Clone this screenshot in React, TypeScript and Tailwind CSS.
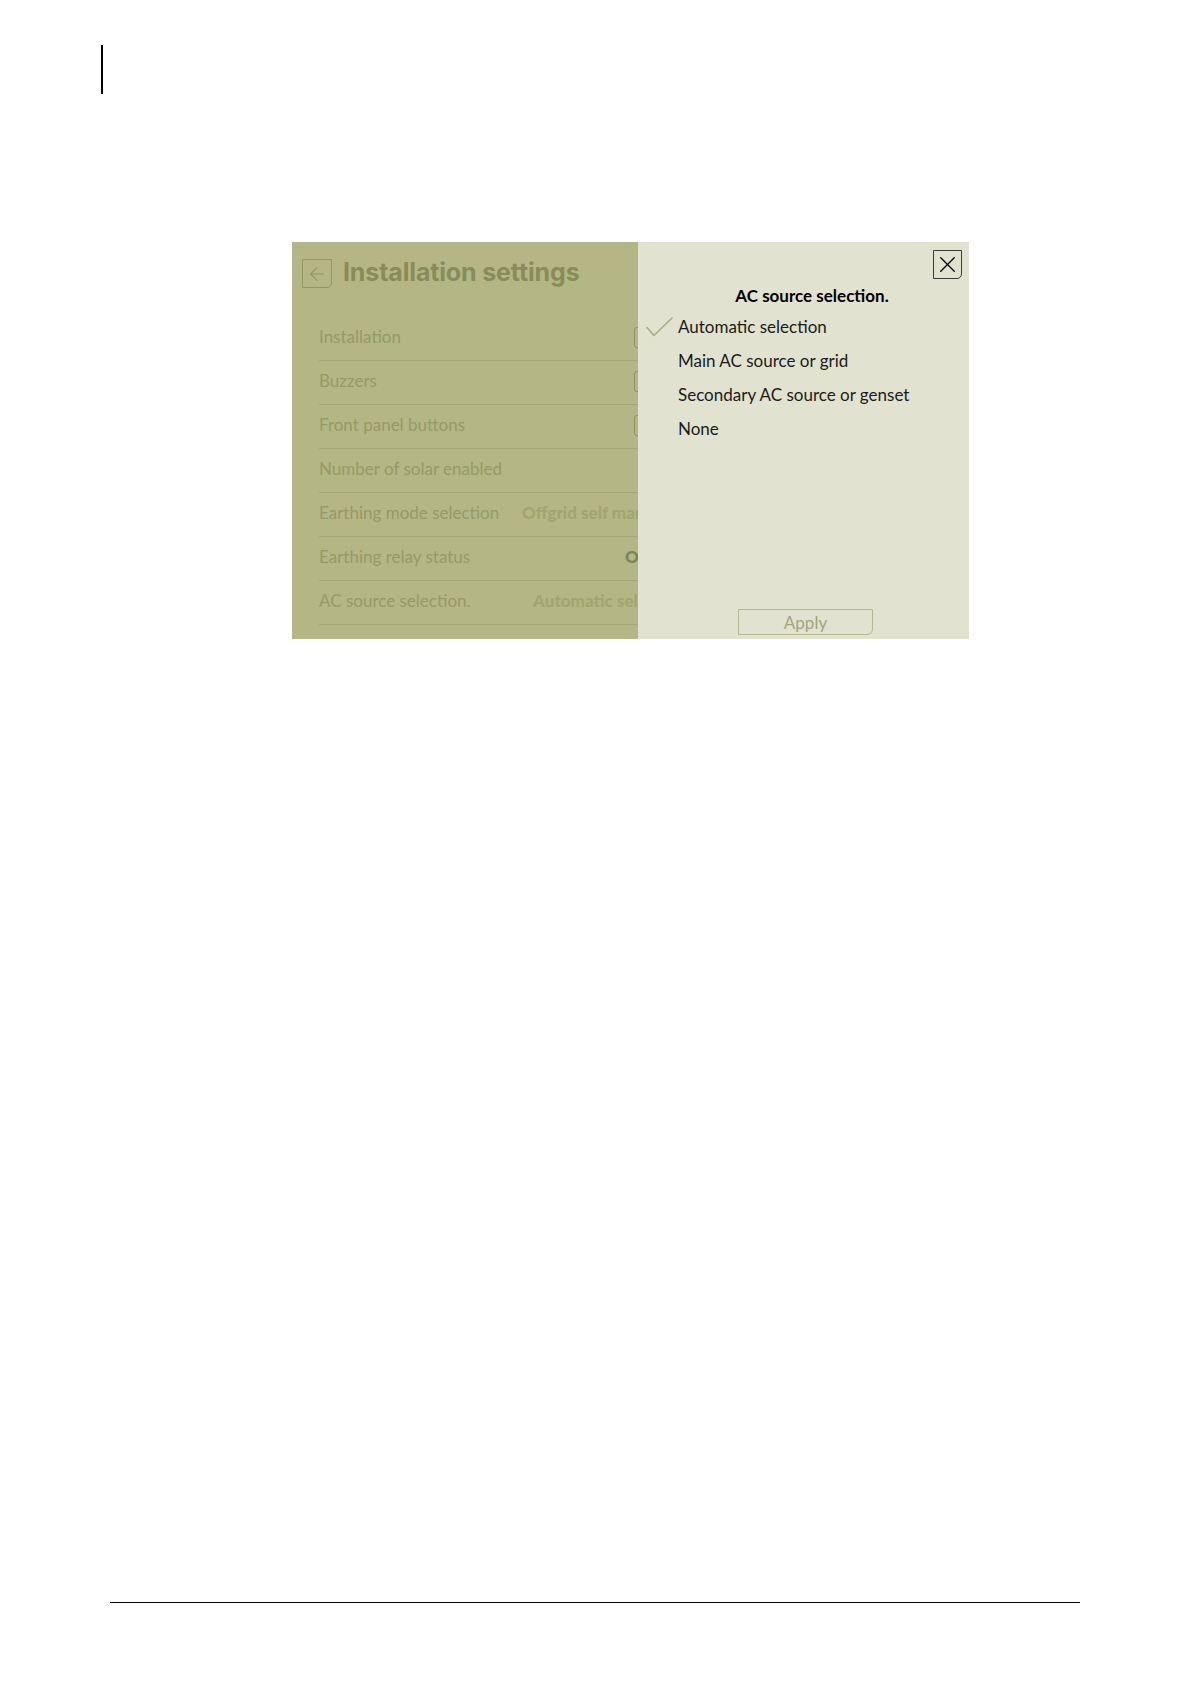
import { ArrowLeft, X } from "lucide-react";

type Row = {
  label: string;
  labelW: string;
  value?: string;
  valueCls?: string;
  toggle?: boolean;
};

const rows: Row[] = [
  { label: "Installation", labelW: "w-[315px]", toggle: true },
  { label: "Buzzers", labelW: "w-[315px]", toggle: true },
  { label: "Front panel buttons", labelW: "w-[315px]", toggle: true },
  { label: "Number of solar enabled", labelW: "w-[315px]" },
  {
    label: "Earthing mode selection",
    labelW: "w-[203px]",
    value: "Offgrid self managed",
    valueCls: "text-[#a2a571]",
  },
  {
    label: "Earthing relay status",
    labelW: "w-[306px]",
    value: "Open",
    valueCls: "text-[#7e8258]",
  },
  {
    label: "AC source selection.",
    labelW: "w-[214px]",
    value: "Automatic selection",
    valueCls: "text-[#a2a571]",
  },
];

const options = [
  "Automatic selection",
  "Main AC source or grid",
  "Secondary AC source or genset",
  "None",
];

function SettingsPanel() {
  return (
    <div className="w-[346px] h-full bg-[#b4b785] overflow-hidden">
      {/* header */}
      <div className="flex items-center pt-[12px] pl-[10px]">
        <div className="mt-[2px] w-[30px] h-[29px] border border-[#939766] rounded-br-[5px] flex items-center justify-center">
          <ArrowLeft className="w-[22px] h-[22px] text-[#939766]" strokeWidth={1.2} />
        </div>
        <h1 className="ml-[11px] text-[25px] font-bold tracking-[-0.15px] text-[#888c5a] font-['Inter',sans-serif]">
          Installation settings
        </h1>
      </div>

      {/* rows */}
      <div className="mt-[25px] ml-[27px] w-[420px]">
        {rows.map((r) => (
          <div
            key={r.label}
            className="h-[44px] flex items-center pb-[2px] border-b border-[#a3a675]"
          >
            <span className={`${r.labelW} shrink-0 text-[17px] text-[#969969]`}>
              {r.label}
            </span>
            {r.toggle && (
              <div className="w-[40px] h-[21px] border border-[#8f935f] rounded-[3px]" />
            )}
            {r.value && (
              <span className={`${r.valueCls} text-[17px] font-black whitespace-nowrap`}>
                {r.value}
              </span>
            )}
          </div>
        ))}
      </div>
    </div>
  );
}

function SelectionDialog() {
  return (
    <div className="flex-1 h-full bg-[#e1e2cf] flex flex-col">
      <button className="self-end mt-[8px] mr-[7px] w-[29px] h-[29px] border border-[#3a3a3a] rounded-br-[5px] flex items-center justify-center">
        <X className="w-[27px] h-[27px] text-black" strokeWidth={1.2} />
      </button>

      <h2 className="mt-[4px] pl-[17px] text-center text-[17px] font-bold text-black">
        AC source selection.
      </h2>

      <ul className="mt-[1px]">
        {options.map((o, i) => (
          <li key={o} className="h-[34px] flex items-center">
            <span className="w-[40px] shrink-0 flex justify-end pr-[5px]">
              {i === 0 && (
                <svg width="27" height="20" viewBox="0 0 27 20" fill="none">
                  <path
                    d="M1 10.5 L8 18.5 L26 1"
                    stroke="#aaae80"
                    strokeWidth="1.6"
                    strokeLinecap="round"
                    strokeLinejoin="round"
                  />
                </svg>
              )}
            </span>
            <span className="text-[17px] text-[#1b1b1b]">{o}</span>
          </li>
        ))}
      </ul>

      <div className="mt-auto mb-[4px] ml-[100px]">
        <button className="w-[135px] h-[26px] border border-[#b6b891] rounded-br-[6px] text-[17px] text-[#a3a57c] leading-none">
          Apply
        </button>
      </div>
    </div>
  );
}

export default function App() {
  return (
    <div className="w-[1191px] h-[1684px] bg-white font-['Lato',sans-serif] flex flex-col">
      {/* page margin marker */}
      <div className="ml-[101px] mt-[45px] w-[1.5px] h-[49px] bg-black" />

      {/* screenshot */}
      <div className="ml-[292px] mt-[148px] w-[677px] h-[397px] flex">
        <SettingsPanel />
        <SelectionDialog />
      </div>

      {/* footer rule */}
      <div className="mt-auto mb-[81px] ml-[110px] w-[970px] h-[1.5px] bg-black" />
    </div>
  );
}
